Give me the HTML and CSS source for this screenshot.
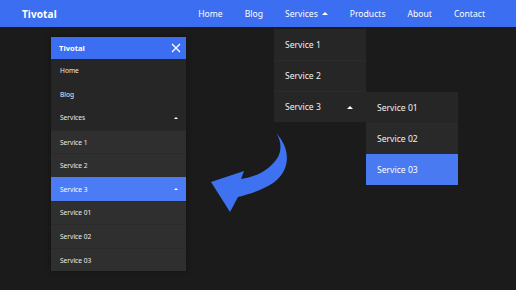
FILE: index.html
```html
<!DOCTYPE html>
<html>
<head>
<meta charset="utf-8">
<link rel="stylesheet" href="styles.css">
</head>
<body>
<header class="navbar">
  <div class="logo">Tivotal</div>
  <nav class="nav">
    <a class="nav-item">Home</a>
    <a class="nav-item">Blog</a>
    <div class="nav-item has-drop">Services <span class="caret"></span>
      <ul class="drop">
        <li class="drop-row">Service 1</li>
        <li class="drop-row">Service 2</li>
        <li class="drop-row has-sub">Service 3 <span class="caret"></span>
          <ul class="submenu">
            <li class="drop-row">Service 01</li>
            <li class="drop-row alt">Service 02</li>
            <li class="drop-row active">Service 03</li>
          </ul>
        </li>
      </ul>
    </div>
    <a class="nav-item">Products</a>
    <a class="nav-item">About</a>
    <a class="nav-item">Contact</a>
  </nav>
</header>
<main class="stage">
  <section class="mobile">
    <div class="m-head">
      <span class="m-logo">Tivotal</span>
      <svg class="close" width="10" height="10" viewBox="0 0 10 10"><path d="M1 1L9 9M9 1L1 9" stroke="#fff" stroke-width="1.3" fill="none"/></svg>
    </div>
    <div class="m-row">Home</div>
    <div class="m-row">Blog</div>
    <div class="m-row">Services <span class="caret small"></span></div>
    <div class="m-row nested">Service 1</div>
    <div class="m-row nested">Service 2</div>
    <div class="m-row nested active">Service 3 <span class="caret small"></span></div>
    <div class="m-row nested">Service 01</div>
    <div class="m-row nested">Service 02</div>
    <div class="m-row nested">Service 03</div>
  </section>
  <svg class="arrow" width="100" height="95" viewBox="0 0 100 95">
    <path d="M76 8 C93 26 91 51 64 63 C56 67 46 70 38 72 L30 87 L11 57 L44 46 L41 54 C56 52 70 45 78 32 C82 24 81 15 76 8 Z" fill="#3f72f0"/>
  </svg>
</main>
</body>
</html>
```
FILE: styles.css
```css
* { box-sizing: border-box; }
html, body { margin: 0; padding: 0; }
body {
  width: 516px;
  height: 290px;
  background: #1b1b1b;
  font-family: "Noto Sans", "Liberation Sans", sans-serif;
  color: #fff;
  overflow: hidden;
}
.navbar {
  height: 27px;
  background: #3b6ef0;
  display: flex;
  align-items: center;
  justify-content: space-between;
  padding: 0 31px 0 22px;
}
.logo {
  font-weight: 700;
  font-size: 10px;
  letter-spacing: 0.1px;
}
.nav {
  display: flex;
  align-items: center;
  gap: 22px;
  height: 100%;
}
.nav-item {
  font-size: 8.6px;
  color: #fff;
  display: flex;
  align-items: center;
  height: 100%;
}
.has-drop { position: relative; }
.caret {
  display: inline-block;
  width: 0; height: 0;
  border-left: 3px solid transparent;
  border-right: 3px solid transparent;
  border-bottom: 3px solid #fff;
  margin-left: 4px;
}
.caret.small {
  border-left-width: 2.5px;
  border-right-width: 2.5px;
  border-bottom-width: 2.5px;
}
ul { list-style: none; margin: 0; padding: 0; }
.drop {
  position: absolute;
  top: 29px;
  left: -11px;
  width: 92px;
  background: #262626;
}
.drop-row {
  height: 31px;
  display: flex;
  align-items: center;
  justify-content: space-between;
  padding: 0 13px 0 11px;
  font-size: 8.6px;
  color: #f2f2f2;
  background: #262626;
  border-top: 1px solid #2b2b2b;
  position: relative;
}
.drop-row:first-child { border-top: none; }
.drop-row.alt { background: #292929; }
.drop-row.active { background: #4a7af2; border-top-color: #4a7af2; color: #fff; }
.has-sub .caret { margin-left: 0; }
.submenu {
  position: absolute;
  top: 0;
  left: 92px;
  width: 92px;
}
.stage {
  position: relative;
  height: 263px;
  padding: 10px 0 0 51px;
}
.mobile {
  width: 135px;
  background: #262626;
  box-shadow: 0 0 6px rgba(0,0,0,0.35);
}
.m-head {
  height: 22px;
  background: #3b6ef0;
  display: flex;
  align-items: center;
  justify-content: space-between;
  padding: 0 5px 0 8px;
}
.m-logo { font-weight: 700; font-size: 7.6px; color: #fff; }
.close { display: block; }
.m-row {
  height: 23.6px;
  display: flex;
  align-items: center;
  justify-content: space-between;
  padding: 0 8px 0 9px;
  font-size: 6.6px;
  color: #ececec;
  background: #262626;
}
.m-row.nested {
  background: #2f2f2f;
  border-top: 1px solid #2a2a2a;
}
.m-row.active { background: #4b7bf5; border-top-color: #4b7bf5; color: #fff; }
.arrow {
  position: absolute;
  left: 200px;
  top: 98px;
}
```
